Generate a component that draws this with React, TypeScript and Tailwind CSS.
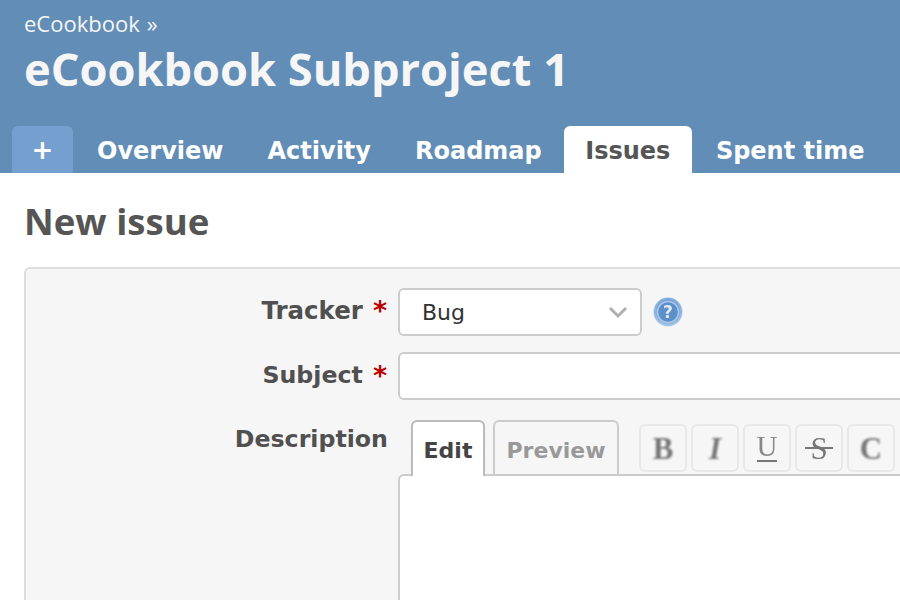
export default function App() {
  return (
    <div className="w-[900px] h-[600px] overflow-hidden bg-white font-['DejaVu_Sans',sans-serif]">
      <header className="h-[173px] bg-[#628db6] flex flex-col">
        <div className="pl-6 pt-[8.5px] h-[39px] text-[22px] leading-[28px] text-[#f6f6f6] font-['Open_Sans',sans-serif] flex">
          <span>eCookbook</span>
          <span className="ml-[7px]">»</span>
        </div>
        <h1 className="pl-6 h-[62px] text-[45.2px] leading-[59px] font-bold text-[#f6f6f6] font-['Open_Sans',sans-serif] whitespace-nowrap">
          eCookbook Subproject 1
        </h1>
        <nav className="mt-auto flex h-[47px] pl-3 text-[24px] font-bold text-white whitespace-nowrap">
          <div className="w-[61px] rounded-t-md bg-[#759fcf] flex justify-center items-center pt-[2px] text-[26px]">+</div>
          <div className="ml-6 flex items-center pt-[2px]">Overview</div>
          <div className="ml-11 flex items-center pt-[2px]">Activity</div>
          <div className="ml-[44px] flex items-center pt-[2px]">Roadmap</div>
          <div className="ml-[22px] px-[21.5px] rounded-t-md bg-white text-[#555] flex items-center pt-[2px]">Issues</div>
          <div className="ml-6 flex items-center pt-[2px]">Spent time</div>
        </nav>
      </header>
      <main className="pl-6 pt-[24px]">
        <h2 className="text-[36.6px] leading-[48px] font-bold text-[#555] font-['Open_Sans',sans-serif] h-[70px]">New issue</h2>
        <div className="w-[1000px] h-[400px] border-2 border-[#ddd] rounded-md bg-[#f6f6f6] pt-[19px] text-[#505050]">
          <div className="flex items-center h-[48px]">
            <label className="w-[361px] text-right text-[24.5px] font-bold flex justify-end items-center pb-[2px]">
              Tracker
              <span className="ml-[10px] text-[#bb0000] text-[27px]">*</span>
            </label>
            <div className="ml-[11px] w-[244px] h-[48px] border-2 border-[#ccc] rounded-md bg-white flex items-center justify-between pl-[22px] pr-[12px] text-[22px] text-[#333]">
              <span>Bug</span>
              <svg width="20" height="14" viewBox="0 0 20 14" fill="none">
                <path d="M2 3l8 8 8-8" stroke="#b0b0b0" strokeWidth="3" />
              </svg>
            </div>
            <svg className="ml-[11px] blur-[0.5px]" width="30" height="30" viewBox="0 0 30 30">
              <defs>
                <radialGradient id="h" cx="50%" cy="45%" r="55%">
                  <stop offset="0%" stopColor="#3f7bc0" />
                  <stop offset="65%" stopColor="#6f9fd6" />
                  <stop offset="100%" stopColor="#b4cfec" />
                </radialGradient>
              </defs>
              <circle cx="15" cy="15" r="14.5" fill="url(#h)" />
              <circle cx="15" cy="15" r="10.5" fill="#5d8fc9" stroke="#a9c8ea" strokeWidth="1.5" />
              <text x="15" y="21" textAnchor="middle" fontSize="17" fontWeight="700" fill="#dfeaf6" fontFamily="DejaVu Sans">?</text>
            </svg>
          </div>
          <div className="flex items-center h-[48px] mt-[16px]">
            <label className="w-[361px] text-right text-[23.7px] font-bold flex justify-end items-center">
              Subject
              <span className="ml-[10px] text-[#bb0000] text-[27px]">*</span>
            </label>
            <div className="ml-[11px] w-[600px] h-[48px] border-2 border-[#ccc] rounded-md bg-white" />
          </div>
          <div className="flex mt-[20px]">
            <label className="w-[362px] pt-[3px] text-right text-[23.7px] font-bold leading-[32px]">Description</label>
            <div className="ml-[10px] w-[600px]">
              <div className="relative z-10 flex items-start h-[54px]">
                <div className="ml-[13px] w-[74px] h-[56px] border-2 border-b-0 border-[#bbb] rounded-t-md bg-white flex items-center justify-center pt-[2px] text-[22px] font-bold text-[#444]">Edit</div>
                <div className="ml-2 w-[126px] h-[54px] border-2 border-b-0 border-[#ccc] rounded-t-md flex items-center justify-center pt-[4px] text-[22px] font-bold text-[#999]">Preview</div>
                <div className="ml-5 flex gap-1 pt-1 font-['Liberation_Serif',serif]">
                  <div className="w-[48px] h-[48px] border-2 border-[#e8e8e8] rounded-md flex items-center justify-center">
                    <span className="text-[31px] leading-none text-[#777] font-bold blur-[0.8px]">B</span>
                  </div>
                  <div className="w-[48px] h-[48px] border-2 border-[#e8e8e8] rounded-md flex items-center justify-center">
                    <span className="text-[31px] leading-none text-[#777] font-bold italic blur-[0.8px]">I</span>
                  </div>
                  <div className="relative w-[48px] h-[48px] border-2 border-[#e8e8e8] rounded-md flex items-center justify-center">
                    <span className="text-[29px] leading-none text-[#888] -mt-[3px] blur-[0.6px]">U</span>
                    <span className="absolute left-[12px] top-[34px] w-[20px] h-[2px] bg-[#777]" />
                  </div>
                  <div className="relative w-[48px] h-[48px] border-2 border-[#e8e8e8] rounded-md flex items-center justify-center">
                    <span className="text-[31px] leading-none text-[#777] blur-[0.7px]">S</span>
                    <span className="absolute left-[8px] top-[21px] w-[28px] h-[2px] bg-[#777]" />
                  </div>
                  <div className="w-[48px] h-[48px] border-2 border-[#e8e8e8] rounded-md flex items-center justify-center">
                    <span className="text-[31px] leading-none text-[#777] font-bold blur-[0.8px]">C</span>
                  </div>
                </div>
              </div>
              <div className="h-[200px] border-2 border-[#ccc] rounded-md bg-white" />
            </div>
          </div>
        </div>
      </main>
    </div>
  );
}
